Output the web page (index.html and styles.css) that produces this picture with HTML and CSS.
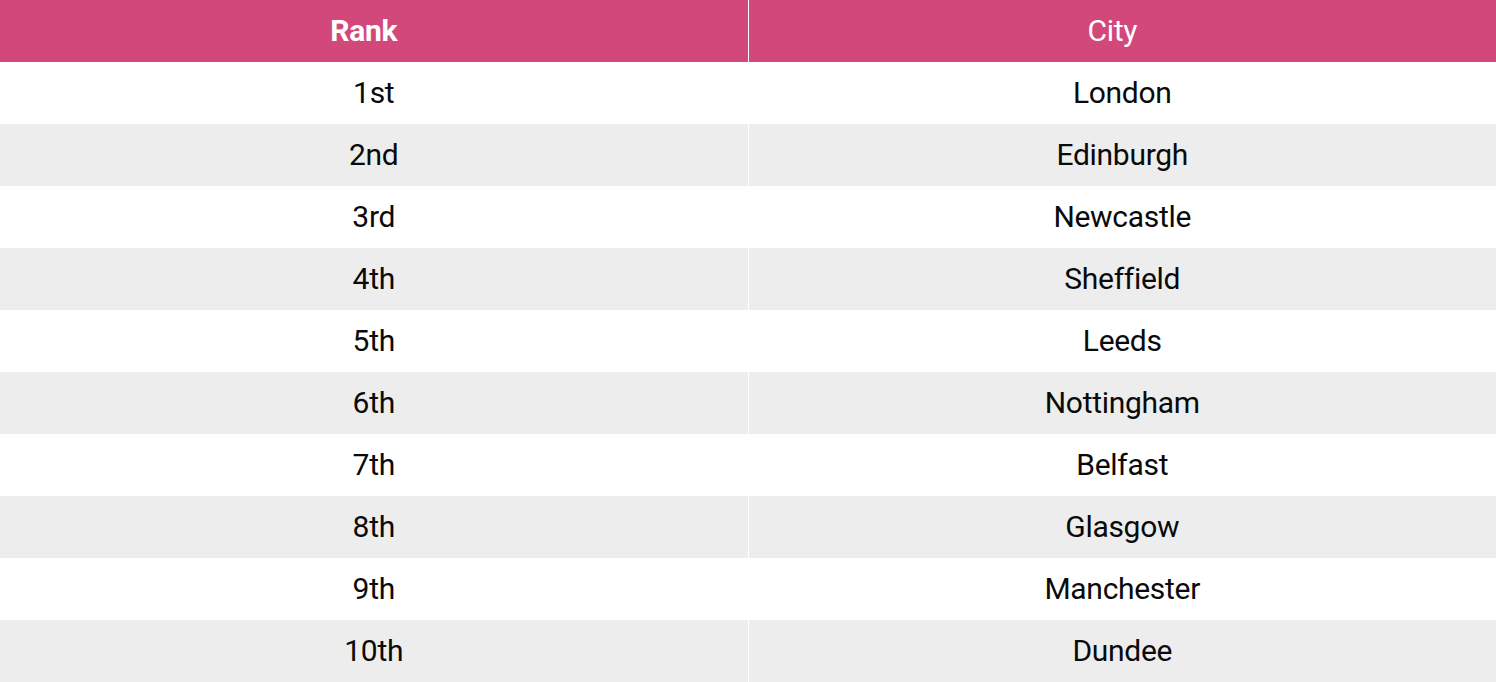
FILE: index.html
```html
<!DOCTYPE html>
<html>
<head>
<meta charset="utf-8">
<link rel="stylesheet" href="styles.css">
</head>
<body>
<table class="rank-table">
  <thead>
    <tr><th class="head-cell">Rank</th><th class="head-cell head-light">City</th></tr>
  </thead>
  <tbody>
    <tr><td>1st</td><td>London</td></tr>
    <tr><td>2nd</td><td>Edinburgh</td></tr>
    <tr><td>3rd</td><td>Newcastle</td></tr>
    <tr><td>4th</td><td>Sheffield</td></tr>
    <tr><td>5th</td><td>Leeds</td></tr>
    <tr><td>6th</td><td>Nottingham</td></tr>
    <tr><td>7th</td><td>Belfast</td></tr>
    <tr><td>8th</td><td>Glasgow</td></tr>
    <tr><td>9th</td><td>Manchester</td></tr>
    <tr><td>10th</td><td>Dundee</td></tr>
  </tbody>
</table>
</body>
</html>
```
FILE: styles.css
```css
html, body {
  margin: 0;
  padding: 0;
  background: #ffffff;
}
body {
  font-family: Roboto, "Liberation Sans", sans-serif;
  color: #0a0a0a;
  overflow: hidden;
}
.rank-table {
  width: 1496px;
  border-collapse: collapse;
  table-layout: fixed;
}
.rank-table th,
.rank-table td {
  width: 50%;
  height: 62px;
  padding: 0;
  text-align: center;
  vertical-align: middle;
  font-size: 30px;
  letter-spacing: -0.3px;
  line-height: 62px;
  box-sizing: border-box;
}
.rank-table th + th,
.rank-table td + td {
  border-left: 1px solid #ffffff;
}
.head-cell {
  background: #d3487a;
  color: #ffffff;
  font-weight: 700;
  padding-right: 20px !important;
}
.head-light {
  font-weight: 400;
}
.rank-table tbody tr:nth-child(even) td {
  background: #ededed;
}
```
